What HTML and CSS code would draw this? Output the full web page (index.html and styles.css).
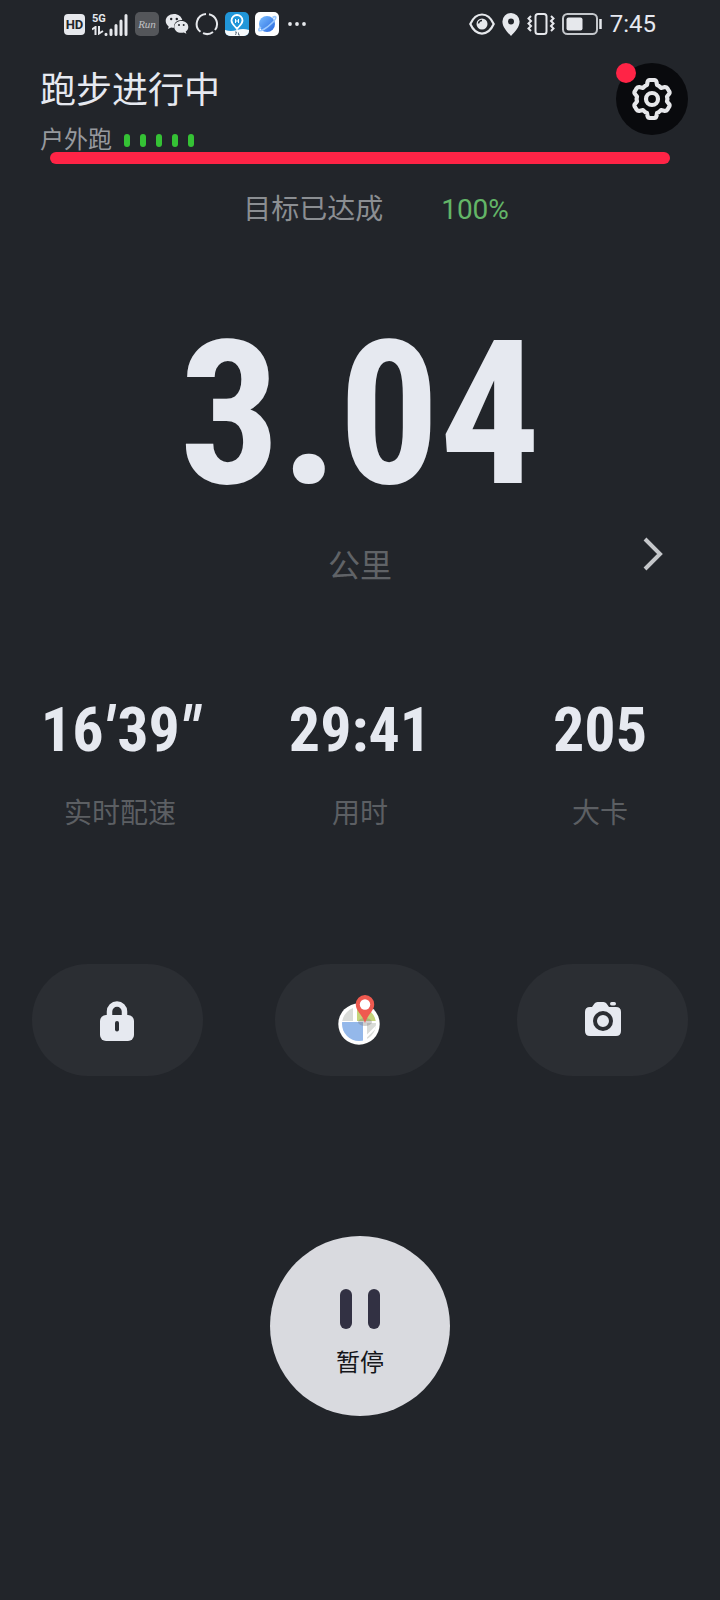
FILE: index.html
```html
<!DOCTYPE html>
<html lang="zh-CN">
<head>
<meta charset="utf-8">
<meta name="viewport" content="width=device-width, initial-scale=1">
<title>跑步进行中</title>
<link rel="stylesheet" href="styles.css">
</head>
<body>
<div class="status">
  <div class="status-group">
    <span class="hd">HD</span>
    <div class="signal">
      <div class="net"><span class="net-label">5G</span>
        <svg width="12" height="9" viewBox="0 0 12 9" fill="none" stroke="#e6e8ec" stroke-width="2"><path d="M0 3.500 3.500 1V9M7 0V7.500L11 5"/></svg>
      </div>
      <svg width="24" height="22" viewBox="0 0 24 22" stroke="#e6e8ec" stroke-width="3" stroke-linecap="round"><path d="M2 20.300v.2M7 16v4.500M12 11.500v9M17 7v13.500M22 1.500v19"/></svg>
    </div>
    <span class="run">Run</span>
    <svg width="24" height="24" viewBox="0 0 24 24"><path fill="#e6e8ec" d="M9 2C4.200 2 .7 5 .7 9c0 2.200 1.200 4.100 3 5.400L3 17l3.100-1.600c.9.3 2 .4 3 .4C8.500 11 12 8 17.300 8.100 16.500 4.500 13.200 2 9 2z"/><path fill="#e6e8ec" d="M16.300 9c-4 0-7 2.600-7 5.900s3 5.900 7 5.900c.9 0 1.700-.1 2.500-.4l2.600 1.400-.7-2.300c1.500-1 2.600-2.700 2.600-4.600 0-3.300-3-5.900-7-5.900z"/><g fill="#22252a"><circle cx="6.200" cy="7" r="1.200"/><circle cx="11.800" cy="7" r="1.200"/><circle cx="14" cy="13" r="1"/><circle cx="18.700" cy="13" r="1"/></g></svg>
    <svg width="24" height="24" viewBox="0 0 24 24" fill="none" stroke="#e6e8ec" stroke-width="2"><path d="M14 2.200a10 10 0 0 1 6 15.800M18 20a10 10 0 0 1-10 1.200M5.500 19.800A10 10 0 0 1 11 2"/></svg>
    <svg width="24" height="24" viewBox="0 0 24 24"><defs><clipPath id="a"><rect width="24" height="24" rx="5"/></clipPath></defs><g clip-path="url(#a)"><path fill="#2196d8" d="M0 0h24v24H0z"/><path fill="#f7fafc" d="M0 18q6 2 12 0t12 0v6H0z"/><path d="M12 17c-2-3-5.500-5-5.500-8.500a5.500 5.500 0 0 1 11 0C17.500 12 14 14 12 17z" fill="none" stroke="#fff" stroke-width="1.800"/><path d="M10.500 7v4M13.500 7v4M10.500 9h3" stroke="#fff" fill="none"/><path d="M10 20h1.500l-1 3M13.500 20.500v2.500h1.500" stroke="#456" fill="none" stroke-width=".8"/></g></svg>
    <svg width="24" height="24" viewBox="0 0 24 24"><defs><linearGradient id="b" x2="1" y2="1"><stop stop-color="#79bdff"/><stop offset="1" stop-color="#2867df"/></linearGradient></defs><rect width="24" height="24" rx="5" fill="#fff"/><circle cx="12" cy="12" r="8" fill="url(#b)"/><path d="M17.500 5.500C22 3 22 6 17 11S5 20 4 18.500 5 16 6 15" fill="none" stroke="#9ccaff" stroke-width="1.600"/></svg>
    <svg width="24" height="24" viewBox="0 0 24 24" fill="#e6e8ec"><circle cx="5" cy="12" r="1.900"/><circle cx="12" cy="12" r="1.900"/><circle cx="19" cy="12" r="1.900"/></svg>
  </div>
  <div class="status-group">
    <svg width="26" height="22" viewBox="0 0 26 22" fill="none" stroke="#e6e8ec" stroke-width="2.200"><path d="M1.300 11C7-1.700 19-1.700 24.700 11 19 23.700 7 23.700 1.300 11z"/><circle cx="13" cy="11" r="5.500" fill="#e6e8ec" stroke="none"/><path d="M9.500 10.500a3.500 3.500 0 0 1 3.500-3" stroke="#22252a" stroke-width="1.500"/></svg>
    <svg width="18" height="23" viewBox="0 0 18 23"><path fill="#e6e8ec" fill-rule="evenodd" d="M9 0a8.600 8.600 0 0 0-8.600 8.600C.4 14 5 19 9 23c4-4 8.600-9 8.600-14.400A8.600 8.600 0 0 0 9 0zm0 5.500a3 3 0 1 1 0 6 3 3 0 0 1 0-6z"/></svg>
    <svg width="28" height="22" viewBox="0 0 28 22" fill="none" stroke="#e6e8ec" stroke-width="2"><rect x="8.500" y="1" width="11" height="20" rx="2.500"/><path d="M4 3 1.500 5.500 4 8 1.500 10.500 4 13l-2.500 2.500L4 18M24 3l2.500 2.500L24 8l2.500 2.500L24 13l2.500 2.500L24 18"/></svg>
    <svg width="41" height="22" viewBox="0 0 41 22"><rect x="1" y="1" width="34" height="20" rx="4.500" fill="none" stroke="#c4c7cb" stroke-width="2"/><rect x="4.500" y="4.500" width="16" height="13" rx="2" fill="#e6e8ec"/><path d="M38.500 6v10" stroke="#e6e8ec" stroke-width="2.500"/></svg>
    <span class="clock">7:45</span>
  </div>
</div>
<main>
  <header class="header">
    <div class="heading">
      <h1>跑步进行中</h1>
      <div class="mode"><span>户外跑</span><span class="gps"><i></i><i></i><i></i><i></i><i></i></span></div>
    </div>
    <button class="settings" aria-label="设置">
      <svg width="42" height="44" viewBox="0 0 42 44" fill="none" stroke="#e6e7ea" stroke-width="4.200" stroke-linejoin="round"><path d="M18.500 3h5Q25 3 25.500 5L26 8Q28 8.600 30 11l4-1q1.500 0 2.500 1.500l1.800 3q.7 1.500-.3 2.500l-2 2.500q.8 2.500 0 5l2 2.500q1 1 .3 2.500l-1.800 3Q35.500 34 34 34l-4-1q-2 2.400-4 3l-.5 3Q25 41 23.500 41h-5Q17 41 16.500 39L16 36q-2-.6-4-3l-4 1q-1.500 0-2.500-1.500l-1.800-3Q3 28 4 27l2-2.500q-.8-2.500 0-5L4 17q-1-1-.3-2.500l1.800-3Q6.500 10 8 10l4 1q2-2.400 4-3l.5-3Q17 3 18.500 3z"/><circle cx="21" cy="22" r="6"/></svg>
      <span class="dot"></span>
    </button>
  </header>
  <div class="progress" role="progressbar" aria-label="目标进度" aria-valuenow="100"></div>
  <div class="goal"><span>目标已达成</span><span class="percent">100%</span></div>
  <section class="distance">
    <div class="distance-value">3.04</div>
    <div class="distance-unit">公里</div>
    <button class="next" aria-label="下一页"><svg width="20" height="34" viewBox="0 0 20 34" fill="none" stroke="#c5c7ca" stroke-width="4"><path d="m2 2 15 15L2 32"/></svg></button>
  </section>
  <dl class="stats">
    <div class="stat"><dd>16<em class="minute">′</em>39<em>″</em></dd><dt>实时配速</dt></div>
    <div class="stat"><dd>29:41</dd><dt>用时</dt></div>
    <div class="stat"><dd>205</dd><dt>大卡</dt></div>
  </dl>
  <div class="controls">
    <button class="pill" aria-label="锁定"><svg width="50" height="50" viewBox="0 0 50 50"><path d="M17.500 24v-7.500a7.500 7.500 0 0 1 15 0V24" fill="none" stroke="#e6e9f0" stroke-width="5.500"/><rect x="8" y="20" width="34" height="26" rx="6" fill="#e6e9f0"/><path d="M25 28v6.500" stroke="#2b2e33" stroke-width="4" stroke-linecap="round"/></svg></button>
    <button class="pill" aria-label="地图"><svg width="50" height="50" viewBox="0 0 50 50"><defs><clipPath id="c"><circle cx="24" cy="29" r="17"/></clipPath></defs><circle cx="24" cy="29" r="20.700" fill="#fff"/><g clip-path="url(#c)"><path fill="#d9dbd8" d="M6 10h12v16H6z"/><path fill="#c5d47b" d="M22 10h20v16H22z"/><path fill="#94b8ea" d="M6 27h22v20H6z"/><path fill="#d9dbd8" d="M32 28h12v18H32z"/><path stroke="#fff" stroke-width="2" d="m31 42 14-14"/></g><ellipse cx="30" cy="27" rx="7" ry="4" fill="#777" opacity=".35"/><path fill="#ef5a50" d="M30 0a9.200 9.200 0 0 0-9.200 9.200C20.800 16 27 19 30 28c3-9 9.200-12 9.200-18.800A9.200 9.200 0 0 0 30 0z"/><circle cx="30" cy="9.500" r="5.200" fill="#fff"/></svg></button>
    <button class="pill" aria-label="拍照"><svg width="50" height="50" viewBox="0 0 50 50"><path fill="#e6e9f0" d="M12 12h2l2.500-3.500Q17.500 7 19.500 7h6q2 0 3 1.500L31 12h7q5 0 5 5v19q0 5-5 5H12q-5 0-5-5V17q0-5 5-5z"/><rect x="32" y="7" width="6" height="3.500" rx="1.700" fill="#e6e9f0"/><circle cx="25" cy="26" r="8" fill="none" stroke="#2b2e33" stroke-width="4"/></svg></button>
  </div>
  <button class="pause"><span class="pause-bars"><i></i><i></i></span><span>暂停</span></button>
</main>
</body>
</html>
```
FILE: styles.css
```css
* { box-sizing: border-box; margin: 0; }
body {
  min-height: 100vh;
  background: #22252a;
  color: #e6e9f0;
  font-family: Roboto, "Noto Sans CJK SC", sans-serif;
}
button { border: 0; padding: 0; font: inherit; cursor: pointer; }
svg { display: block; flex: none; }

.status { display: flex; justify-content: space-between; align-items: center; height: 48px; padding: 0 64px; }
.status-group { display: flex; align-items: center; gap: 6px; }
.status-group + .status-group { gap: 7px; }
.hd { width: 21px; height: 21px; border-radius: 4px; background: #e6e8ec; color: #22252a; font-size: 13px; font-weight: 700; line-height: 21px; text-align: center; }
.signal { display: flex; align-items: flex-end; height: 24px; padding: 0 1px; }
.net { display: flex; flex-direction: column; gap: 2px; width: 12px; height: 22px; }
.net-label { font-size: 11px; font-weight: 700; line-height: 10px; }
.run { width: 24px; height: 24px; border-radius: 5px; background: #54565a; color: #c0c1c4; font: italic 11px/24px "Liberation Serif", serif; text-align: center; }
.clock { font-size: 24px; line-height: 28px; }

.header { display: flex; justify-content: space-between; align-items: flex-start; padding: 15px 32px 0 40px; }
.heading { display: flex; flex-direction: column; gap: 13px; padding-top: 4px; }
h1 { font-size: 36px; font-weight: 400; line-height: 48px; }
.mode { display: flex; align-items: center; gap: 12px; color: #96999e; font-size: 24px; line-height: 24px; }
.gps { display: flex; gap: 10px; }
.gps i { width: 6px; height: 13px; border-radius: 3px; background: #35c235; }
.settings { position: relative; display: grid; place-items: center; width: 72px; height: 72px; border-radius: 50%; background: #090a0d; }
.dot { position: absolute; top: 0; left: 0; width: 20px; height: 20px; border-radius: 50%; background: #ff2446; }
.progress { height: 12px; margin: 0 50px; border-radius: 6px; background: #ff2446; }

.goal { display: flex; justify-content: center; gap: 58px; margin-top: 26px; padding-left: 32px; color: #8b8e92; font-size: 28px; line-height: 40px; }
.percent { color: #63b567; }

.distance { display: grid; grid-template-columns: 1fr auto 1fr; row-gap: 17px; margin-top: 85px; }
.distance-value { grid-column: 1 / -1; text-align: center; font: 700 200px/200px "Roboto Condensed", Roboto, sans-serif; }
.distance-unit { grid-column: 2; padding-top: 14px; color: #606367; font-size: 32px; line-height: 40px; }
.next { grid-column: 3; justify-self: end; display: grid; place-items: center; width: 48px; height: 44px; margin-right: 43px; background: none; }

.stats { display: grid; grid-template-columns: repeat(3, 1fr); margin-top: 112px; text-align: center; }
.stat { display: flex; flex-direction: column; gap: 32px; }
.stat dd { font: 700 62px/64px "Roboto Condensed", Roboto, sans-serif; }
.stat dd em { font-style: italic; }
.minute { padding-right: 4px; }
.stat dt { color: #5c5f63; font-size: 28px; line-height: 40px; }

.controls { display: flex; justify-content: space-between; margin-top: 130px; padding: 0 32px; }
.pill { display: grid; place-items: center; width: 26%; height: 112px; border-radius: 56px; background: #2b2e33; }

.pause { display: flex; flex-direction: column; align-items: center; gap: 18px; width: 180px; height: 180px; margin: 160px auto 0; padding-top: 53px; border-radius: 50%; background: #d9dadf; color: #15161a; font-size: 24px; line-height: 32px; }
.pause-bars { display: flex; gap: 16px; }
.pause-bars i { width: 12px; height: 40px; border-radius: 6px; background: #323143; }
```
